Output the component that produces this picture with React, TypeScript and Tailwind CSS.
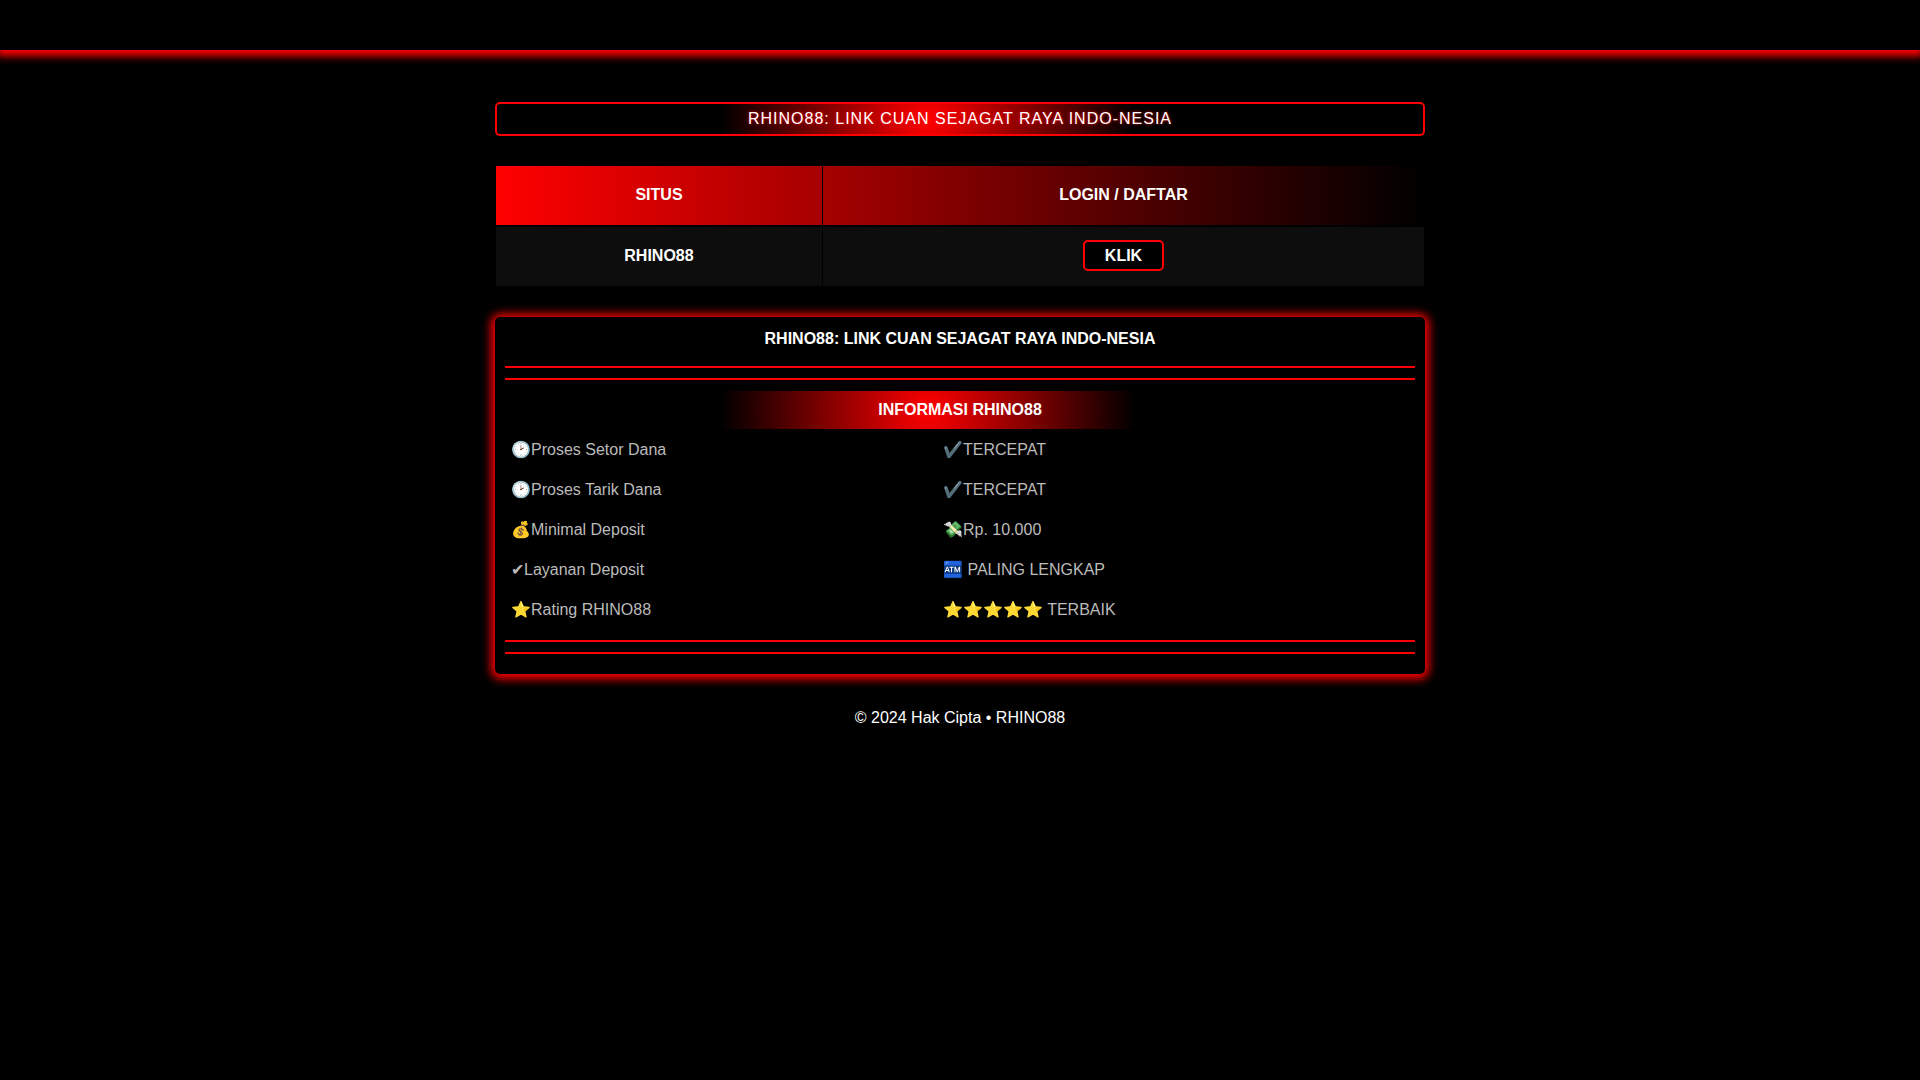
const rows = [
  { label: "🕑Proses Setor Dana", value: "✔️TERCEPAT" },
  { label: "🕑Proses Tarik Dana", value: "✔️TERCEPAT" },
  { label: "💰Minimal Deposit", value: "💸Rp. 10.000" },
  { label: "✔Layanan Deposit", value: "🏧 PALING LENGKAP" },
  { label: "⭐Rating RHINO88", value: "⭐⭐⭐⭐⭐ TERBAIK" },
];

const DoubleLine = () => (
  <div className="h-[14px] border-y-2 border-[#ff0000]" />
);

const SitesTable = () => (
  <table className="mt-[29px] w-full border-separate border-spacing-0 border-x border-black text-center font-bold">
    <thead>
      <tr className="bg-[linear-gradient(to_right,#ff0000,#000000)]">
        <th className="h-[61px] w-[327px] border-y border-r border-black pb-[2px]">
          SITUS
        </th>
        <th className="border-y border-black pb-[2px]">LOGIN / DAFTAR</th>
      </tr>
    </thead>
    <tbody>
      <tr className="bg-[#0d0d0d]">
        <td className="h-[61px] border-y border-r border-black pb-[2px]">
          RHINO88
        </td>
        <td className="border-y border-black pb-[2px]">
          <a
            href="#"
            className="inline-block rounded-[5px] border-2 border-[#ff0000] bg-black px-5 leading-[27px]"
          >
            KLIK
          </a>
        </td>
      </tr>
    </tbody>
  </table>
);

const InfoPanel = () => (
  <section className="mt-[30px] rounded-[5px] bg-black px-[10px] pt-[10px] pb-5 shadow-[0_1px_10px_4px_#ff0000]">
    <h2 className="mb-[15px] text-center leading-6 font-bold">
      RHINO88: LINK CUAN SEJAGAT RAYA INDO-NESIA
    </h2>
    <DoubleLine />
    <table className="my-[11px] w-full border-separate border-spacing-0 text-left text-[#bbbbbb]">
      <thead>
        <tr>
          <th
            colSpan={2}
            className="h-[38px] bg-[radial-gradient(circle_at_423px_50%,#ff0000,#000000_208px)] text-center text-white"
          >
            INFORMASI RHINO88
          </th>
        </tr>
      </thead>
      <tbody>
        {rows.map((row) => (
          <tr key={row.label}>
            <td className="h-10 w-[432px] pt-[2px] pl-[6px]">{row.label}</td>
            <td className="pt-[2px] pl-[6px]">{row.value}</td>
          </tr>
        ))}
      </tbody>
    </table>
    <DoubleLine />
  </section>
);

const App = () => {
  return (
    <div className="min-h-screen bg-black font-['Liberation_Sans',Arial,sans-serif] text-base text-white">
      <header className="h-[50px] bg-black shadow-[0_2px_8px_4px_#ff0000]" />
      <main className="mx-auto mt-[52px] max-w-[930px]">
        <h1 className="rounded-[5px] border-2 border-[#ff0000] bg-[radial-gradient(circle_at_431px_50%,#ff0000,#000000_208px)] text-center leading-[30px] tracking-[1px] [text-shadow:0_0_3px_#ff0000]">
          RHINO88: LINK CUAN SEJAGAT RAYA INDO-NESIA
        </h1>
        <SitesTable />
        <InfoPanel />
      </main>
      <footer className="mt-8 text-center leading-6">
        © 2024 Hak Cipta • RHINO88
      </footer>
    </div>
  );
};

export default App;
